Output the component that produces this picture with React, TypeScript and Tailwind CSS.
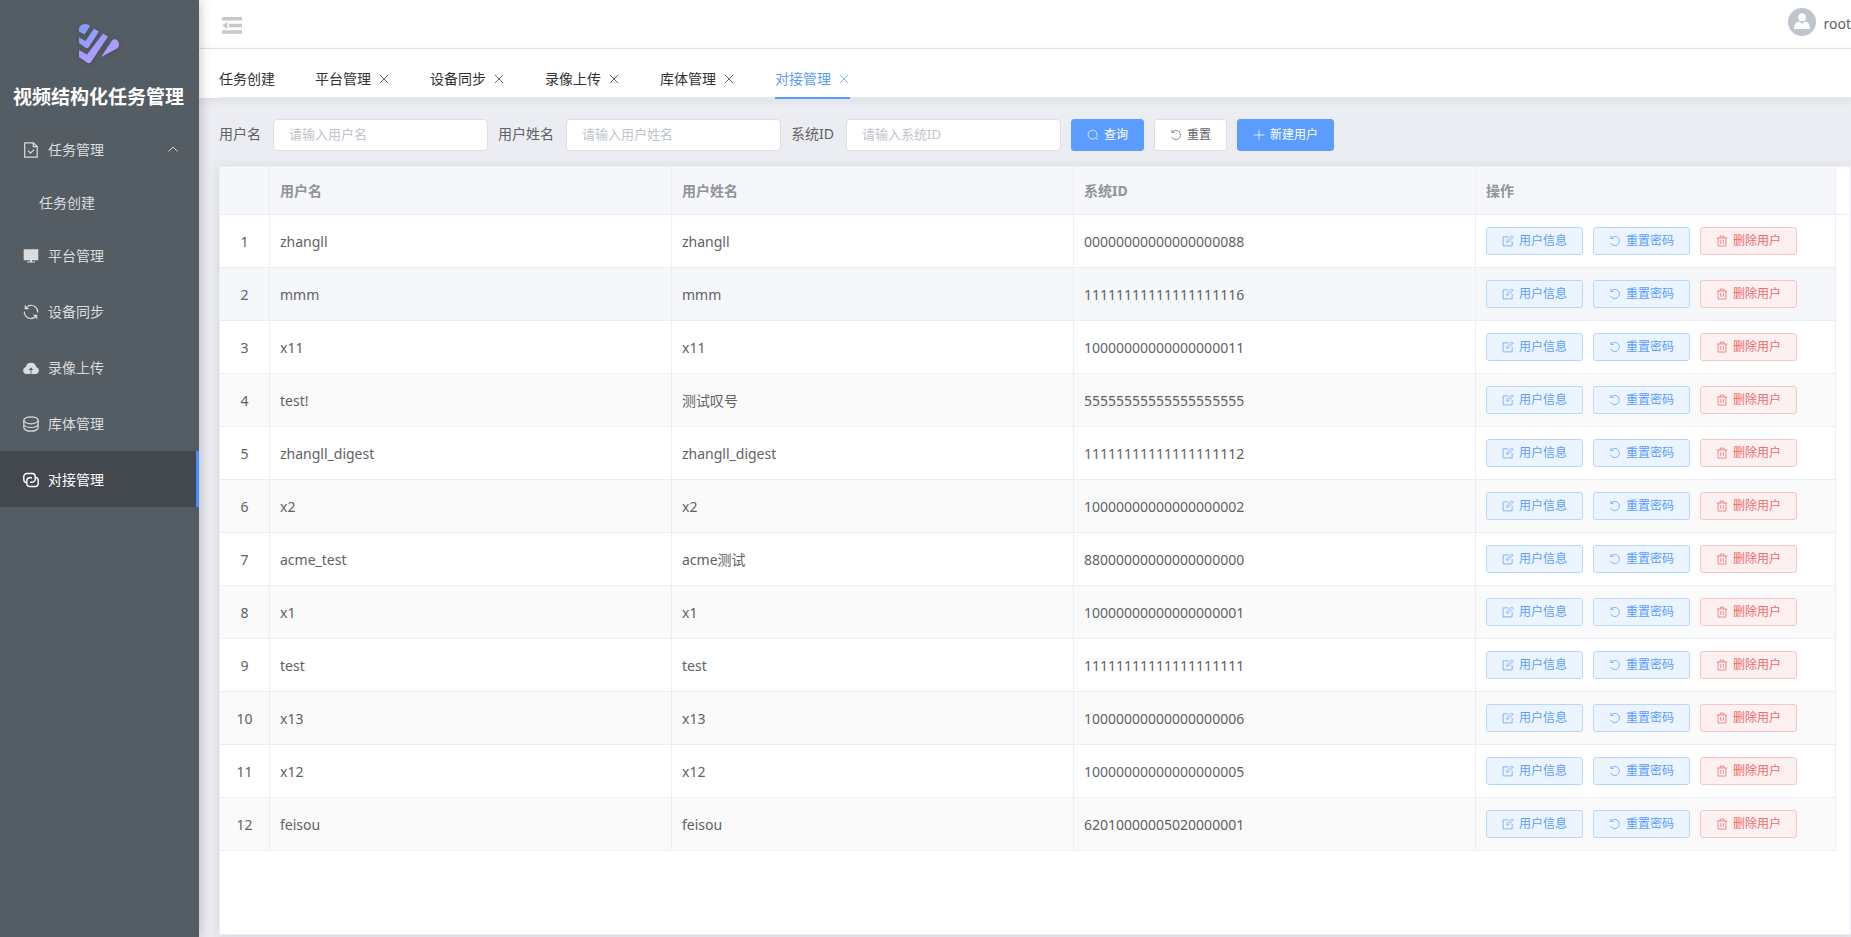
import type { ReactNode } from "react";
import { clsx } from "clsx";

interface IconProps {
  children: ReactNode;
  className?: string;
}

const Icon = ({ children, className }: IconProps) => (
  <svg
    viewBox="0 0 16 16"
    fill="none"
    stroke="currentColor"
    aria-hidden="true"
    className={clsx("shrink-0", className)}
  >
    {children}
  </svg>
);

const icons = {
  document: (
    <>
      <path d="M1.700 .8h8.800l3.700 3.700v10.700H1.700z" strokeWidth="1.200" />
      <path d="M10.300 1v3.700H14M5 8.700l2.400 2.400 3.800-3.500" strokeWidth="1.200" />
    </>
  ),
  platform: (
    <path
      d="M.7 1.300h14.600v11H.7zM7 12.300h2v1.300h3v.9H4v-.9h3z"
      fill="currentColor"
      stroke="none"
    />
  ),
  sync: (
    <>
      <path d="M1.300 7.500a6.700 6.700 0 0 0 6.200 7.200M14.700 8.500A6.700 6.700 0 0 0 6 1.600L2.600 4" strokeWidth="1.200" />
      <path d="M2.300 1.300v3.300h3.300M13.700 14.700v-3.300h-3.300" strokeWidth="1.200" />
      <path d="M7.500 14.700c2.500 0 4.500-1 5.900-3" strokeWidth="1.200" />
    </>
  ),
  cloud: (
    <path
      d="M3.400 14A3.500 3.500 0 0 1 2.800 7.100a5.300 5.300 0 0 1 10.400 0A3.500 3.500 0 0 1 12.600 14H8.400V10h2L8 7.400 5.600 10h2v4z"
      fill="currentColor"
      stroke="none"
    />
  ),
  coin: (
    <>
      <ellipse cx="8" cy="4.300" rx="7.200" ry="3.500" strokeWidth="1.200" />
      <path
        d="M.8 4.300v7.200c0 2 3.200 3.700 7.200 3.700s7.200-1.700 7.200-3.700V4.300M.8 8c0 2 3.200 3.500 7.200 3.500s7.200-1.500 7.200-3.500"
        strokeWidth="1.200"
      />
    </>
  ),
  link: (
    <>
      <path
        d="M3.600 10.600A3 3 0 0 1 .8 7.600V4.500a3 3 0 0 1 3-3h5.400a3 3 0 0 1 3 3v2.700a3 3 0 0 1-3 3H7"
        strokeWidth="1.400"
      />
      <path
        d="M12.400 5.400a3 3 0 0 1 2.800 3v3.100a3 3 0 0 1-3 3H6.800a3 3 0 0 1-3-3V8.800a3 3 0 0 1 3-3H9"
        strokeWidth="1.400"
      />
    </>
  ),
  search: (
    <>
      <circle cx="7.500" cy="7.500" r="6" />
      <path d="m11.800 11.800 3 3" />
    </>
  ),
  reset: (
    <>
      <path d="M3 4.200a6.100 6.100 0 1 1-.8 6.300" />
      <path d="M2.500 1.200v3.500H6" />
    </>
  ),
  plus: <path d="M8 1v14M1 8h14" />,
  edit: (
    <>
      <path d="M8.500 2.500h-7v12h12V8" />
      <path d="m6.300 9.700.6-2.500 6-6 1.900 1.900-6 6z" />
    </>
  ),
  trash: (
    <>
      <path d="M1 4h14M5.500 4V1.500h5V4M2.800 4v10.700h10.400V4" />
      <path d="M6.300 6.800v5M9.700 6.800v5" />
    </>
  ),
  close: <path d="m2.500 2.500 11 11m0-11-11 11" />,
};

type IconName = keyof typeof icons;

const menu: { label: string; icon: IconName; active?: boolean }[] = [
  { label: "平台管理", icon: "platform" },
  { label: "设备同步", icon: "sync" },
  { label: "录像上传", icon: "cloud" },
  { label: "库体管理", icon: "coin" },
  { label: "对接管理", icon: "link", active: true },
];

const tabs = ["平台管理", "设备同步", "录像上传", "库体管理", "对接管理"];

const fields = [
  { id: "username", label: "用户名" },
  { id: "realname", label: "用户姓名" },
  { id: "system-id", label: "系统ID" },
];

const users = [
  ["zhangll", "zhangll", "00000000000000000088"],
  ["mmm", "mmm", "11111111111111111116"],
  ["x11", "x11", "10000000000000000011"],
  ["test!", "测试叹号", "55555555555555555555"],
  ["zhangll_digest", "zhangll_digest", "11111111111111111112"],
  ["x2", "x2", "10000000000000000002"],
  ["acme_test", "acme测试", "88000000000000000000"],
  ["x1", "x1", "10000000000000000001"],
  ["test", "test", "11111111111111111111"],
  ["x13", "x13", "10000000000000000006"],
  ["x12", "x12", "10000000000000000005"],
  ["feisou", "feisou", "62010000005020000001"],
];

const Logo = () => (
  <svg viewBox="0 0 40 40" className="h-10 w-10 drop-shadow-sm" aria-hidden="true">
    <defs>
      <linearGradient id="logo" gradientUnits="userSpaceOnUse" x1="4" y1="0" x2="20" y2="36">
        <stop offset="0" stopColor="#7f9cff" />
        <stop offset="1" stopColor="#b79cfb" />
      </linearGradient>
    </defs>
    <g fill="url(#logo)">
      <path d="M0 7.500V4.500C.5 1.500 3 0 6 0c2.500 0 4 .8 5 2L5.500 10.500z" />
      <path d="M0 13.500 6.500 17 15 4.500l5 3L9.500 23.500c-.8 1-1.800 1-2.800.3L0 19z" />
      <path d="m0 26 8 4.500L24 9.500l5 3L12 38c-1 1.500-2.500 1.500-4 .5L0 33z" />
      <path d="M22 33 33 16.500c3-3 7-.5 7 4 0 2-1 3.500-3 4.500z" />
    </g>
  </svg>
);

const Sidebar = () => (
  <aside className="z-10 flex w-[199px] shrink-0 flex-col bg-[#545c64] text-sm text-[#dcdcdc] shadow-[2px_0_10px_rgba(0,0,0,0.2)]">
    <div className="flex flex-col items-center pt-6 pr-[2px]">
      <Logo />
      <h1 className="mt-4 mb-[7px] text-[19px] leading-[34px] font-bold text-white">
        视频结构化任务管理
      </h1>
    </div>
    <nav>
      <button type="button" className="flex h-14 w-full items-center gap-[9px] px-[23px] pt-[2px]">
        <Icon className="size-4">{icons.document}</Icon>
        任务管理
        <svg
          viewBox="0 0 10 6"
          fill="none"
          stroke="currentColor"
          className="mr-[-2px] mb-[2px] ml-auto h-[6px] w-[10px]"
        >
          <path d="m.5 5.500 4.500-4.500 4.500 4.500" />
        </svg>
      </button>
      <a href="#create" className="flex h-[50px] items-center px-[39px] pt-[2px]">
        任务创建
      </a>
      {menu.map((item) => (
        <a
          key={item.label}
          href="#menu"
          className={clsx(
            "flex h-14 items-center gap-[9px] border-r-3 px-[23px] pt-[2px]",
            item.active
              ? "border-[#478ffc] bg-[#43484f] text-white"
              : "border-transparent",
          )}
        >
          <Icon className="size-4">{icons[item.icon]}</Icon>
          {item.label}
        </a>
      ))}
    </nav>
  </aside>
);

const Header = () => (
  <header className="flex h-[49px] shrink-0 items-center justify-between border-b border-[#e4e5e8] bg-white pl-[23px]">
    <button type="button" aria-label="收起菜单" className="pt-[2px]">
      <svg viewBox="0 0 20 17" fill="#c8c8c8" className="h-[17px] w-5">
        <path d="M0 0h20v3.500H0zM7 6.700h13v3.500H7zM0 13.300h20v3.500H0zM0 8.500 5.500 5v7z" />
      </svg>
    </button>
    <div className="flex items-center text-sm text-[#606266]">
      <svg viewBox="0 0 28 28" className="mr-2 mb-1 size-7" aria-hidden="true">
        <circle cx="14" cy="14" r="14" fill="#c0c4cc" />
        <circle cx="14" cy="9.200" r="3.900" fill="#fff" />
        <path d="M6 21c0-5 2-7 5.500-7.500L14 16l2.500-2.500C20 14 22 16 22 21z" fill="#fff" />
      </svg>
      root
    </div>
  </header>
);

const Tabs = () => (
  <nav className="relative h-[49px] shrink-0 bg-white pl-5 shadow-[0_2px_10px_rgba(0,0,0,0.08)]">
    <div className="flex h-[50px] gap-10 border-b-2 border-[#e4e7ed] text-sm text-[#303133]">
      <a href="#create" className="flex items-center pt-3">
        任务创建
      </a>
      {tabs.map((tab) => {
        const active = tab === "对接管理";
        return (
          <div
            key={tab}
            className={clsx(
              "-mb-[2px] flex items-center gap-[7px] border-b-2 pt-3",
              active ? "border-[#5b9dff] text-[#5b9dff]" : "border-transparent",
            )}
          >
            <a href="#tab">{tab}</a>
            <button type="button" aria-label={`关闭${tab}`}>
              <Icon className="size-3">{icons.close}</Icon>
            </button>
          </div>
        );
      })}
    </div>
  </nav>
);

interface ButtonProps {
  icon: IconName;
  className: string;
  children: ReactNode;
}

const Button = ({ icon, className, children }: ButtonProps) => (
  <button
    type="button"
    className={clsx(
      "flex shrink-0 items-center gap-[5px] rounded-[3px] border px-[15px] text-xs",
      className,
    )}
  >
    <Icon className="size-3">{icons[icon]}</Icon>
    {children}
  </button>
);

const SearchForm = () => (
  <form className="flex items-center gap-[10px] text-sm text-[#606266]">
    {fields.map((field) => (
      <div key={field.id} className="flex items-center gap-3">
        <label htmlFor={field.id} className="pb-[2px]">
          {field.label}
        </label>
        <input
          id={field.id}
          placeholder={`请输入${field.label}`}
          className="h-8 w-[215px] rounded border border-[#dcdfe6] bg-white px-[15px] pb-[2px] text-[13px] placeholder:text-[#c0c4cc]"
        />
      </div>
    ))}
    <Button icon="search" className="h-8 border-[#5b9dff] bg-[#5b9dff] text-white">
      查询
    </Button>
    <Button icon="reset" className="h-8 border-[#dcdfe6] bg-white">
      重置
    </Button>
    <Button icon="plus" className="h-8 border-[#5b9dff] bg-[#5b9dff] text-white">
      新建用户
    </Button>
  </form>
);

const UserTable = () => (
  <div className="flex-1 border border-[#ebeef5] bg-white shadow-[0_2px_12px_rgba(0,0,0,0.1)]">
    {/* Header line runs on over the scrollbar gutter */}
    <div className="bg-[linear-gradient(#ebeef5,#ebeef5)] bg-[length:100%_1px] bg-[position:0_47px] bg-no-repeat pr-[14px]">
      <table className="w-full table-fixed border-separate border-spacing-0 text-left text-sm text-[#606266]">
        <colgroup>
          <col className="w-[50px]" />
          <col />
          <col />
          <col />
          <col className="w-[360px]" />
        </colgroup>
        <thead className="bg-[#f5f7fa] text-[#909399]">
          <tr className="h-12">
            {["", "用户名", "用户姓名", "系统ID", "操作"].map((title) => (
              <th key={title} className="border-r border-b border-[#ebeef5] px-[10px] font-bold">
                {title}
              </th>
            ))}
          </tr>
        </thead>
        <tbody>
          {users.map((user, i) => (
            <tr
              key={user[0]}
              className={clsx(
                "h-[53px]",
                i === 1 ? "bg-[#f5f7fa]" : i % 2 === 1 && "bg-[#fafafa]",
              )}
            >
              <td className="border-r border-b border-[#ebeef5] pt-[2px] text-center">{i + 1}</td>
              {user.map((value, j) => (
                <td key={j} className="border-r border-b border-[#ebeef5] px-[10px] pt-[2px]">
                  {value}
                </td>
              ))}
              <td className="border-r border-b border-[#ebeef5] px-[10px]">
                <div className="flex gap-[10px]">
                  <Button icon="edit" className="h-7 border-[#b8d7ff] bg-[#ecf5ff] text-[#5b9dff]">
                    用户信息
                  </Button>
                  <Button icon="reset" className="h-7 border-[#b8d7ff] bg-[#ecf5ff] text-[#5b9dff]">
                    重置密码
                  </Button>
                  <Button icon="trash" className="h-7 border-[#f9c4c4] bg-[#fcf0f0] text-[#ee6b6b]">
                    删除用户
                  </Button>
                </div>
              </td>
            </tr>
          ))}
        </tbody>
      </table>
    </div>
  </div>
);

export default function App() {
  return (
    <div className="flex min-h-screen font-['Noto_Sans','Noto_Sans_CJK_SC',sans-serif]">
      <Sidebar />
      <div className="flex min-w-0 flex-1 flex-col">
        <Header />
        <Tabs />
        <main className="flex flex-1 flex-col gap-[15px] bg-[#ecedf3] pt-[21px] pb-[2px] pl-5">
          <SearchForm />
          <UserTable />
        </main>
      </div>
    </div>
  );
}
